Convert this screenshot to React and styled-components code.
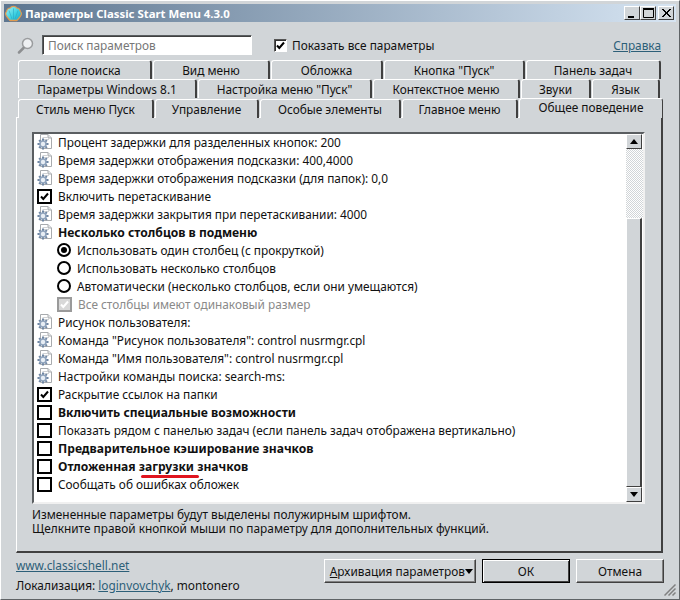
import styled, { createGlobalStyle } from "styled-components";

const GlobalStyle = createGlobalStyle`
  html, body { margin: 0; padding: 0; background: #d1d5d8; }
  * { box-sizing: border-box; }
`;

const Frame = styled.div`
  width: 680px;
  height: 600px;
  background: #d1d5d8;
  border: 1px solid #5f6366;
  border-top-color: #fff;
  border-left-color: #fff;
  box-shadow: inset 0 0 0 1px #d1d5d8;
  padding: 3px 3px 2px;
  font-family: "Noto Sans", sans-serif;
  font-size: 11.85px;
  color: #111;
  position: relative;
  display: flex;
  flex-direction: column;
`;

const TitleBar = styled.div`
  height: 18px;
  flex: none;
  background: linear-gradient(90deg, #5d7690 0%, #d6e4f2 100%);
  display: flex;
  align-items: center;
  padding: 0 2px 0 1px;
  color: #fff;
  font-weight: bold;
  font-size: 11.4px;
`;

const TitleText = styled.span`
  margin-left: 3px;
  flex: 1;
`;

const WinButton = styled.div`
  width: 16px;
  height: 14px;
  background: #d1d5d8;
  border: 1px solid;
  border-color: #fff #404040 #404040 #fff;
  margin-left: ${(p) => p.$gap || "0"};
  display: flex;
  align-items: center;
  justify-content: center;
`;

const Content = styled.div`
  flex: 1;
  padding: 0 12px 0 12px;
  display: flex;
  flex-direction: column;
`;

const SearchRow = styled.div`
  height: 38px;
  flex: none;
  display: flex;
  align-items: center;
  padding: 8px 3px 0 1px;
`;

const SearchInput = styled.div`
  width: 210px;
  height: 20px;
  margin-left: 8px;
  background: #fff;
  border: 1px solid;
  border-color: #5a5e61 #fff #fff #5a5e61;
  box-shadow: inset 1px 1px 0 #404040;
  color: #777;
  display: flex;
  align-items: center;
  padding-left: 5px;
`;

const ShowAll = styled.div`
  margin-left: 22px;
  flex: 1;
  display: flex;
  align-items: center;
  gap: 5px;
`;

const TextLink = styled.a`
  color: #2d5f78;
  text-decoration: underline;
`;

const TabRows = styled.div`
  margin-left: 2px;
  flex: none;
  position: relative;
  z-index: 1;
`;

const TabRow = styled.div`
  height: ${(p) => (p.$last ? "20px" : "19px")};
  display: flex;
  align-items: flex-end;
`;

const Tab = styled.div`
  width: ${(p) => p.$w}px;
  height: ${(p) => (p.$active ? "20px" : "19px")};
  margin-right: 1px;
  background: #d1d5d8;
  border: 1px solid;
  border-color: #fff #404040 transparent #fff;
  border-right-width: ${(p) => (p.$active ? "1px" : "2px")};
  border-bottom: none;
  border-radius: 3px 3px 0 0;
  display: flex;
  align-items: ${(p) => (p.$active ? "flex-start" : "center")};
  justify-content: center;
  white-space: nowrap;
`;

const Panel = styled.div`
  height: 436px;
  flex: none;
  margin-top: -1px;
  width: 647px;
  border: 1px solid;
  border-color: #fff #404040 #404040 #fff;
  border-right-width: 2px;
  border-bottom-width: 2px;
  padding: 14px 17px 0 15px;
`;

const ListBox = styled.div`
  width: 613px;
  height: 372px;
  background: #fff;
  border: 2px solid;
  border-color: #5a5e61 #f0f0f0 #f0f0f0 #5a5e61;
  display: flex;
`;

const Rows = styled.div`
  flex: 1;
  margin-top: -1px;
`;

const Row = styled.div`
  height: 18px;
  display: flex;
  align-items: center;
  padding-left: ${(p) => (p.$indent ? "23px" : "3px")};
  gap: 6px;
  font-weight: ${(p) => (p.$bold ? "bold" : "normal")};
  font-size: ${(p) => (p.$bold ? "12.1px" : "inherit")};
  color: ${(p) => (p.$muted ? "#8a8a8a" : "#111")};
  position: relative;
  white-space: nowrap;
`;

const Mark = styled.span`
  position: absolute;
  left: 107px;
  top: 18px;
  width: 58px;
  height: 3px;
  border-radius: 2px;
  background: #e0141e;
`;

const CheckBox = styled.span`
  width: 15px;
  height: 15px;
  flex: none;
  border: 2px solid ${(p) => (p.$muted ? "#9a9a9a" : "#000")};
  background: ${(p) => (p.$muted ? "#d8d8d8" : "#fff")};
  display: flex;
  align-items: center;
  justify-content: center;
`;

const SmallCheck = styled(CheckBox)`
  width: 13px;
  height: 13px;
  border-width: 1px;
  border-color: #555 #fff #fff #555;
  box-shadow: inset 1px 1px 0 #303030;
`;

const Radio = styled.span`
  width: 14px;
  height: 14px;
  flex: none;
  border: 2px solid #000;
  border-radius: 50%;
  display: flex;
  align-items: center;
  justify-content: center;
  &::after {
    content: "";
    width: 6px;
    height: 6px;
    border-radius: 50%;
    background: ${(p) => (p.$on ? "#000" : "transparent")};
  }
`;

const ScrollBar = styled.div`
  width: 17px;
  flex: none;
  display: flex;
  flex-direction: column;
`;

const ScrollButton = styled.div`
  width: 16px;
  height: 15px;
  flex: none;
  background: #d1d5d8;
  border: 1px solid;
  border-color: #fff #404040 #404040 #fff;
  display: flex;
  align-items: center;
  justify-content: center;
`;

const ScrollTrack = styled.div`
  height: ${(p) => p.$h}px;
  flex: none;
  background: repeating-conic-gradient(#d1d5d8 0 25%, #fff 0 50%) 0 0 / 2px 2px;
`;

const ScrollThumb = styled.div`
  flex: 1;
  background: #d1d5d8;
  width: 16px;
  border: 1px solid;
  border-color: #fff #404040 #404040 #fff;
  border-right-width: 2px;
`;

const Hint = styled.div`
  margin-top: 3px;
  line-height: 14px;
  white-space: nowrap;
`;

const Footer = styled.div`
  display: flex;
  justify-content: space-between;
  padding: 6px 0 0 0;
  flex: none;
`;

const FootLeft = styled.div`
  display: flex;
  flex-direction: column;
  margin-top: -2px;
  gap: 4px;
  line-height: 16px;
`;

const FootRight = styled.div`
  display: flex;
  gap: 6px;
`;

const Button = styled.div`
  width: ${(p) => p.$w}px;
  height: 24px;
  padding-right: ${(p) => (p.$menu ? "2px" : "0")};
  background: #d1d5d8;
  border: 1px solid;
  border-color: ${(p) => (p.$def ? "#000" : "#fff #404040 #404040 #fff")};
  box-shadow: ${(p) => (p.$def ? "inset 1px 1px 0 #fff, inset -1px -1px 0 #404040" : "inset -1px -1px 0 #808080")};
  display: flex;
  align-items: center;
  justify-content: ${(p) => (p.$menu ? "flex-end" : "center")};
  white-space: nowrap;
`;

const Grip = styled.svg`
  position: absolute;
  right: 3px;
  bottom: 3px;
`;

const RowIcon = styled.svg`
  flex: none;
`;

const gearTeeth = [0, 45, 90, 135];

function SettingIcon() {
  return (
    <RowIcon width="15" height="16" viewBox="0 0 15 16">
      <path d="M3.500 .5H11L14.500 4V14.500H3.500Z" fill="#fff" stroke="#a8abae" />
      <path d="M11 .5V4H14.500" fill="#e4e6e8" stroke="#a8abae" />
      <path d="M5.500 3.500H10M5.500 5.500H12" stroke="#d0d2d4" />
      <g transform="translate(6 10)">
        {gearTeeth.map((a) => (
          <rect key={a} x="-1" y="-5.500" width="2" height="11" fill="#6f86a3" transform={`rotate(${a})`} />
        ))}
        <circle r="3.800" fill="#8fa3bc" />
        <circle r="2.200" fill="#e8eef5" />
      </g>
    </RowIcon>
  );
}

// fan shaped shell from the window's title bar
function ShellIcon() {
  return (
    <svg width="17" height="17" viewBox="0 0 17 17">
      <defs>
        <linearGradient id="shellFill" x1="0" y1="0" x2="1" y2="1">
          <stop offset="0" stopColor="#a6f2f4" />
          <stop offset=".55" stopColor="#3fd2e2" />
          <stop offset="1" stopColor="#16a4c4" />
        </linearGradient>
      </defs>
      <path
        d="M5 15.500L2.500 12.500C.5 10.500.3 8 1.500 6.500 2 4.500 3.500 3 5 3 6 1.800 7.300 1.300 8.500 1.300S11 1.800 12 3c1.500 0 3 1.500 3.500 3.500 1.200 1.500 1 4-1 6L12 15.500Z"
        fill="url(#shellFill)"
        stroke="#e09a50"
        strokeWidth="1.200"
      />
      <path d="M5 15.500h7" stroke="#e09a50" strokeWidth="1.500" />
      <path d="M8.500 14V3.500M7 14L4 5.500M10 14l3-8.500" stroke="#2aa8c4" strokeWidth=".6" />
    </svg>
  );
}

function Tick({ color = "#000" }) {
  return (
    <svg width="11" height="11" viewBox="0 0 11 11">
      <path d="M2 5.500L4.300 8L9 2.500" fill="none" stroke={color} strokeWidth="2" />
    </svg>
  );
}

function Arrow({ up }) {
  return (
    <svg width="8" height="5" viewBox="0 0 8 5">
      <path d={up ? "M4 0L8 5H0Z" : "M0 0H8L4 5Z"} fill="#000" />
    </svg>
  );
}

const rows = [
  { kind: "gear", text: "Процент задержки для разделенных кнопок: 200" },
  { kind: "gear", text: "Время задержки отображения подсказки: 400,4000" },
  { kind: "gear", text: "Время задержки отображения подсказки (для папок): 0,0" },
  { kind: "check", on: true, text: "Включить перетаскивание" },
  { kind: "gear", text: "Время задержки закрытия при перетаскивании: 4000" },
  { kind: "gear", bold: true, text: "Несколько столбцов в подменю" },
  { kind: "radio", on: true, text: "Использовать один столбец (с прокруткой)" },
  { kind: "radio", text: "Использовать несколько столбцов" },
  { kind: "radio", text: "Автоматически (несколько столбцов, если они умещаются)" },
  { kind: "check", indent: true, muted: true, on: true, text: "Все столбцы имеют одинаковый размер" },
  { kind: "gear", text: "Рисунок пользователя:" },
  { kind: "gear", text: 'Команда "Рисунок пользователя": control nusrmgr.cpl' },
  { kind: "gear", text: 'Команда "Имя пользователя": control nusrmgr.cpl' },
  { kind: "gear", text: "Настройки команды поиска: search-ms:" },
  { kind: "check", on: true, text: "Раскрытие ссылок на папки" },
  { kind: "check", bold: true, text: "Включить специальные возможности" },
  { kind: "check", text: "Показать рядом с панелью задач (если панель задач отображена вертикально)" },
  { kind: "check", bold: true, text: "Предварительное кэширование значков" },
  { kind: "check", bold: true, mark: true, text: "Отложенная загрузки значков" },
  { kind: "check", text: "Сообщать об ошибках обложек" },
];

const tabRows = [
  [
    ["Поле поиска", 134],
    ["Вид меню", 117],
    ["Обложка", 112],
    ['Кнопка "Пуск"', 141],
    ["Панель задач", 135],
  ],
  [
    ["Параметры Windows 8.1", 179],
    ['Настройка меню "Пуск"', 174],
    ["Контекстное меню", 147],
    ["Звуки", 70],
    ["Язык", 68],
  ],
  [
    ["Стиль меню Пуск", 136],
    ["Управление", 104],
    ["Особые элементы", 141],
    ["Главное меню", 116],
    ["Общее поведение", 144, true],
  ],
];

export default function App() {
  return (
    <>
      <GlobalStyle />
      <Frame>
        <TitleBar>
          <ShellIcon />
          <TitleText>Параметры Classic Start Menu 4.3.0</TitleText>
          <WinButton>
            <svg width="10" height="10" viewBox="0 0 10 10"><path d="M1 8h6v2H1z" fill="#000" /></svg>
          </WinButton>
          <WinButton>
            <svg width="11" height="10" viewBox="0 0 11 10"><path d="M.5 1.500h10v8H.5z" fill="none" stroke="#000" /><path d="M0 .5h11" stroke="#000" strokeWidth="2" /></svg>
          </WinButton>
          <WinButton $gap="2px">
            <svg width="9" height="8" viewBox="0 0 9 8"><path d="M0 0l8 8M1 0l8 8M8 0L0 8M9 0L1 8" stroke="#000" /></svg>
          </WinButton>
        </TitleBar>
        <Content>
          <SearchRow>
            <svg width="17" height="17" viewBox="0 0 17 17">
              <circle cx="10.500" cy="6.500" r="5" fill="#eef0f2" stroke="#9a9c9e" strokeWidth="1.500" />
              <path d="M6.500 11L2 15.500" stroke="#8d8f91" strokeWidth="2.500" strokeLinecap="round" />
            </svg>
            <SearchInput>Поиск параметров</SearchInput>
            <ShowAll>
              <SmallCheck>
                <Tick />
              </SmallCheck>
              Показать все параметры
            </ShowAll>
            <TextLink>Справка</TextLink>
          </SearchRow>
          <TabRows>
            {tabRows.map((tabs, i) => (
              <TabRow key={i} $last={i === 2}>
                {tabs.map(([label, w, active]) => (
                  <Tab key={label} $w={w} $active={active}>
                    {label}
                  </Tab>
                ))}
              </TabRow>
            ))}
          </TabRows>
          <Panel>
            <ListBox>
              <Rows>
                {rows.map((r) => (
                  <Row key={r.text} $bold={r.bold} $muted={r.muted} $indent={r.kind === "radio" || r.indent}>
                    {r.kind === "gear" && <SettingIcon />}
                    {r.kind === "check" && <CheckBox $muted={r.muted}>{r.on && <Tick color={r.muted ? "#fff" : "#000"} />}</CheckBox>}
                    {r.kind === "radio" && <Radio $on={r.on} />}
                    {r.text}
                    {r.mark && <Mark />}
                  </Row>
                ))}
              </Rows>
              <ScrollBar>
                <ScrollButton><Arrow up /></ScrollButton>
                <ScrollTrack $h={69} />
                <ScrollThumb />
                <ScrollButton><Arrow /></ScrollButton>
              </ScrollBar>
            </ListBox>
            <Hint>
              Измененные параметры будут выделены полужирным шрифтом.
              <br />
              Щелкните правой кнопкой мыши по параметру для дополнительных функций.
            </Hint>
          </Panel>
          <Footer>
            <FootLeft>
              <TextLink>www.classicshell.net</TextLink>
              <span>
                Локализация: <TextLink>loginvovchyk</TextLink>, montonero
              </span>
            </FootLeft>
            <FootRight>
              <Button $w={152} $menu>
                <span><u>А</u>рхивация параметров</span>
                <Arrow />
              </Button>
              <Button $w={88} $def>ОК</Button>
              <Button $w={88}>Отмена</Button>
            </FootRight>
          </Footer>
        </Content>
        <Grip width="12" height="12" viewBox="0 0 12 12">
          <path d="M11.500 .5L.5 11.500M11.500 4.500L4.500 11.500M11.500 8.500L8.500 11.500" stroke="#808080" strokeWidth="1.500" />
        </Grip>
      </Frame>
    </>
  );
}
